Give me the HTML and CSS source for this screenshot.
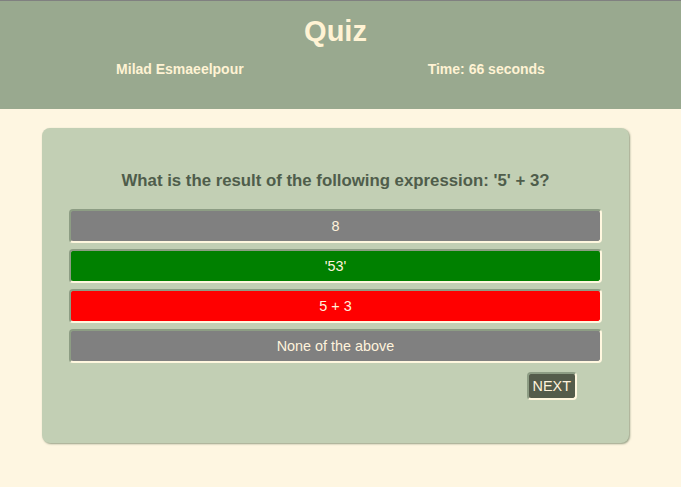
FILE: index.html
```html
<!DOCTYPE html>
<html>
<head>
<meta charset="utf-8">
<link rel="stylesheet" href="styles.css">
</head>
<body>
<header class="top">
  <h1 class="title">Quiz</h1>
  <div class="meta">
    <span class="meta-item">Milad Esmaeelpour</span>
    <span class="meta-item">Time: 66 seconds</span>
  </div>
</header>
<main class="card">
  <p class="question">What is the result of the following expression: '5' + 3?</p>
  <div class="options">
    <button class="opt opt-gray">8</button>
    <button class="opt opt-green">'53'</button>
    <button class="opt opt-red">5 + 3</button>
    <button class="opt opt-gray">None of the above</button>
  </div>
  <div class="actions">
    <button class="next">NEXT</button>
  </div>
</main>
</body>
</html>
```
FILE: styles.css
```css
html, body {
  margin: 0;
  padding: 0;
}
body {
  background: #fef6e1;
  font-family: "Liberation Sans", Arial, sans-serif;
  height: 487px;
  overflow: hidden;
}
.top {
  background: #99a98f;
  border-top: 1px solid #808080;
  height: 109px;
  box-sizing: border-box;
  padding: 14px 10px 0 0;
  color: #fff3d4;
}
.title {
  margin: 0;
  text-align: center;
  font-size: 29px;
  font-weight: bold;
  line-height: 32px;
}
.meta {
  display: flex;
  justify-content: center;
  gap: 184px;
  padding-right: 10px;
  margin-top: 13px;
  font-size: 14px;
  font-weight: bold;
  line-height: 18px;
}
.card {
  display: block;
  width: 587px;
  box-sizing: border-box;
  margin: 19px 0 0 42px;
  height: 315px;
  background: #c2cfb4;
  border-radius: 8px;
  box-shadow: 1px 1px 2px rgba(80, 100, 70, 0.6);
  padding: 42px 27px 0 27px;
}
.question {
  margin: 0;
  text-align: center;
  color: #4f5d4b;
  font-size: 16.8px;
  font-weight: bold;
  line-height: 22px;
}
.options {
  margin-top: 17px;
  display: flex;
  flex-direction: column;
  gap: 6px;
}
.opt {
  display: block;
  width: 100%;
  height: 34px;
  border-radius: 4px;
  border: 2px solid;
  border-color: #8d9d84 #fff7df #fff7df #8d9d84;
  color: #fff3dc;
  font-family: "Liberation Sans", Arial, sans-serif;
  font-size: 14.4px;
  padding: 0;
}
.opt-gray { background: #808080; }
.opt-green { background: #008000; }
.opt-red { background: #ff0000; }
.actions {
  display: flex;
  justify-content: flex-end;
  padding-right: 25px;
  margin-top: 9px;
}
.next {
  height: 28px;
  padding: 0 4px;
  background: #545c4b;
  color: #fff3dc;
  border-radius: 4px;
  border: 2px solid;
  border-color: #8d9d84 #fff7df #fff7df #8d9d84;
  font-family: "Liberation Sans", Arial, sans-serif;
  font-size: 14.4px;
}
```
